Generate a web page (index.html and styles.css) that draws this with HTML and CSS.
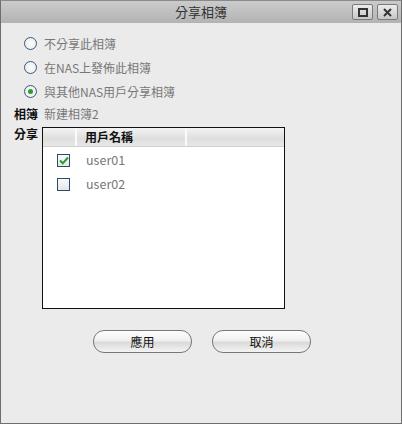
FILE: index.html
```html
<!DOCTYPE html>
<html>
<head>
<meta charset="utf-8">
<link rel="stylesheet" href="styles.css">
</head>
<body>
<div class="win">
  <div class="titlebar">
    <span class="title">分享相簿</span>
    <div class="tbtns">
      <span class="tbtn"><span class="maxico"></span></span>
      <span class="tbtn"><svg width="9" height="9" viewBox="0 0 9 9"><path d="M1 1L8 8M8 1L1 8" stroke="#333" stroke-width="2"/></svg></span>
    </div>
  </div>
  <div class="content">
    <div class="radios">
      <div class="radio"><span class="rdot"></span><span>不分享此相簿</span></div>
      <div class="radio"><span class="rdot"></span><span>在NAS上發佈此相簿</span></div>
      <div class="radio"><span class="rdot on"></span><span>與其他NAS用戶分享相簿</span></div>
    </div>
    <div class="field"><span class="lbl">相簿</span><span class="val">新建相簿2</span></div>
    <div class="share">
      <span class="lbl">分享</span>
      <div class="grid">
        <div class="ghead"><div class="hc c1"></div><div class="hc c2">用戶名稱</div><div class="hc c3"></div></div>
        <div class="grow"><span class="cb"><svg width="10" height="9" viewBox="0 0 10 9"><path d="M1 4.5L3.8 7.3L9 1.5" stroke="#2e9a2e" stroke-width="2" fill="none"/></svg></span><span class="uname">user01</span></div>
        <div class="grow"><span class="cb"></span><span class="uname">user02</span></div>
      </div>
    </div>
    <div class="actions">
      <button class="btn">應用</button>
      <button class="btn">取消</button>
    </div>
  </div>
</div>
</body>
</html>
```
FILE: styles.css
```css
html, body { margin: 0; padding: 0; }
body { width: 402px; height: 424px; font-family: "Noto Sans CJK TC", "Liberation Sans", sans-serif; }
.win { box-sizing: border-box; width: 402px; height: 424px; border: 1px solid #6e6e6e; border-top-color: #8a8a8a; background: #ebebeb; display: flex; flex-direction: column; }
.titlebar { height: 22px; flex: none; background: linear-gradient(#cbcbcb, #b3b3b3); display: flex; align-items: center; justify-content: center; position: relative; }
.title { font-size: 13px; color: #333; line-height: 22px; }
.tbtns { position: absolute; right: 3px; top: 3px; display: flex; gap: 4px; }
.tbtn { box-sizing: border-box; width: 21px; height: 16px; border: 1px solid #7a7a7a; border-radius: 2px; background: linear-gradient(#ececec, #c6c6c6); display: flex; align-items: center; justify-content: center; }
.maxico { box-sizing: border-box; width: 10px; height: 9px; border: 2px solid #333; }
.content { padding: 11px 0 0 13px; font-size: 12px; }
.radios { display: flex; flex-direction: column; gap: 6px; padding-left: 10px; }
.radio { display: flex; align-items: center; gap: 7px; height: 18px; color: #777; }
.rdot { box-sizing: border-box; width: 13px; height: 13px; border-radius: 50%; border: 1.5px solid #3a5a80; background: radial-gradient(#fff, #e4e4e4); display: flex; align-items: center; justify-content: center; }
.rdot.on::after { content: ""; width: 5px; height: 5px; border-radius: 50%; background: #2c9a2c; }
.field { display: flex; gap: 6px; margin-top: 5px; height: 16px; align-items: center; }
.lbl { font-weight: bold; color: #111; }
.val { color: #777; }
.share { display: flex; gap: 4px; }
.share .lbl { line-height: 17px; margin-top: 4px; }
.grid { box-sizing: border-box; width: 243px; height: 182px; border: 1px solid #111; background: #fff; margin-top: 6px; }
.ghead { display: flex; height: 18px; background: linear-gradient(#f3f3f3, #dedede 60%, #e8e8e8); border-bottom: 1px solid #d0d0d0; }
.hc { box-sizing: border-box; border-right: 2px solid #fafafa; line-height: 18px; font-weight: bold; color: #111; }
.c1 { width: 34px; }
.c2 { width: 110px; padding-left: 8px; }
.c3 { flex: 1; border-right: none; }
.grow { display: flex; align-items: center; height: 24px; overflow: hidden; }
.ghead + .grow { margin-top: 1px; }
.cb { box-sizing: border-box; width: 13px; height: 13px; border: 1px solid #2a4a6e; background: linear-gradient(#fafafa, #e6e6e6); margin-left: 14px; display: flex; align-items: center; justify-content: center; flex: none; }
.uname { margin-left: 16px; color: #777; font-size: 12.5px; line-height: 16px; }
.actions { display: flex; gap: 20px; margin-left: 79px; margin-top: 21px; }
.btn { box-sizing: border-box; width: 99px; height: 23px; border: 1px solid #777; border-radius: 11px; background: linear-gradient(#fdfdfd, #f0f0f0 45%, #dadada 55%, #f4f4f4); font-family: inherit; font-size: 12px; color: #111; padding: 0; }
```
